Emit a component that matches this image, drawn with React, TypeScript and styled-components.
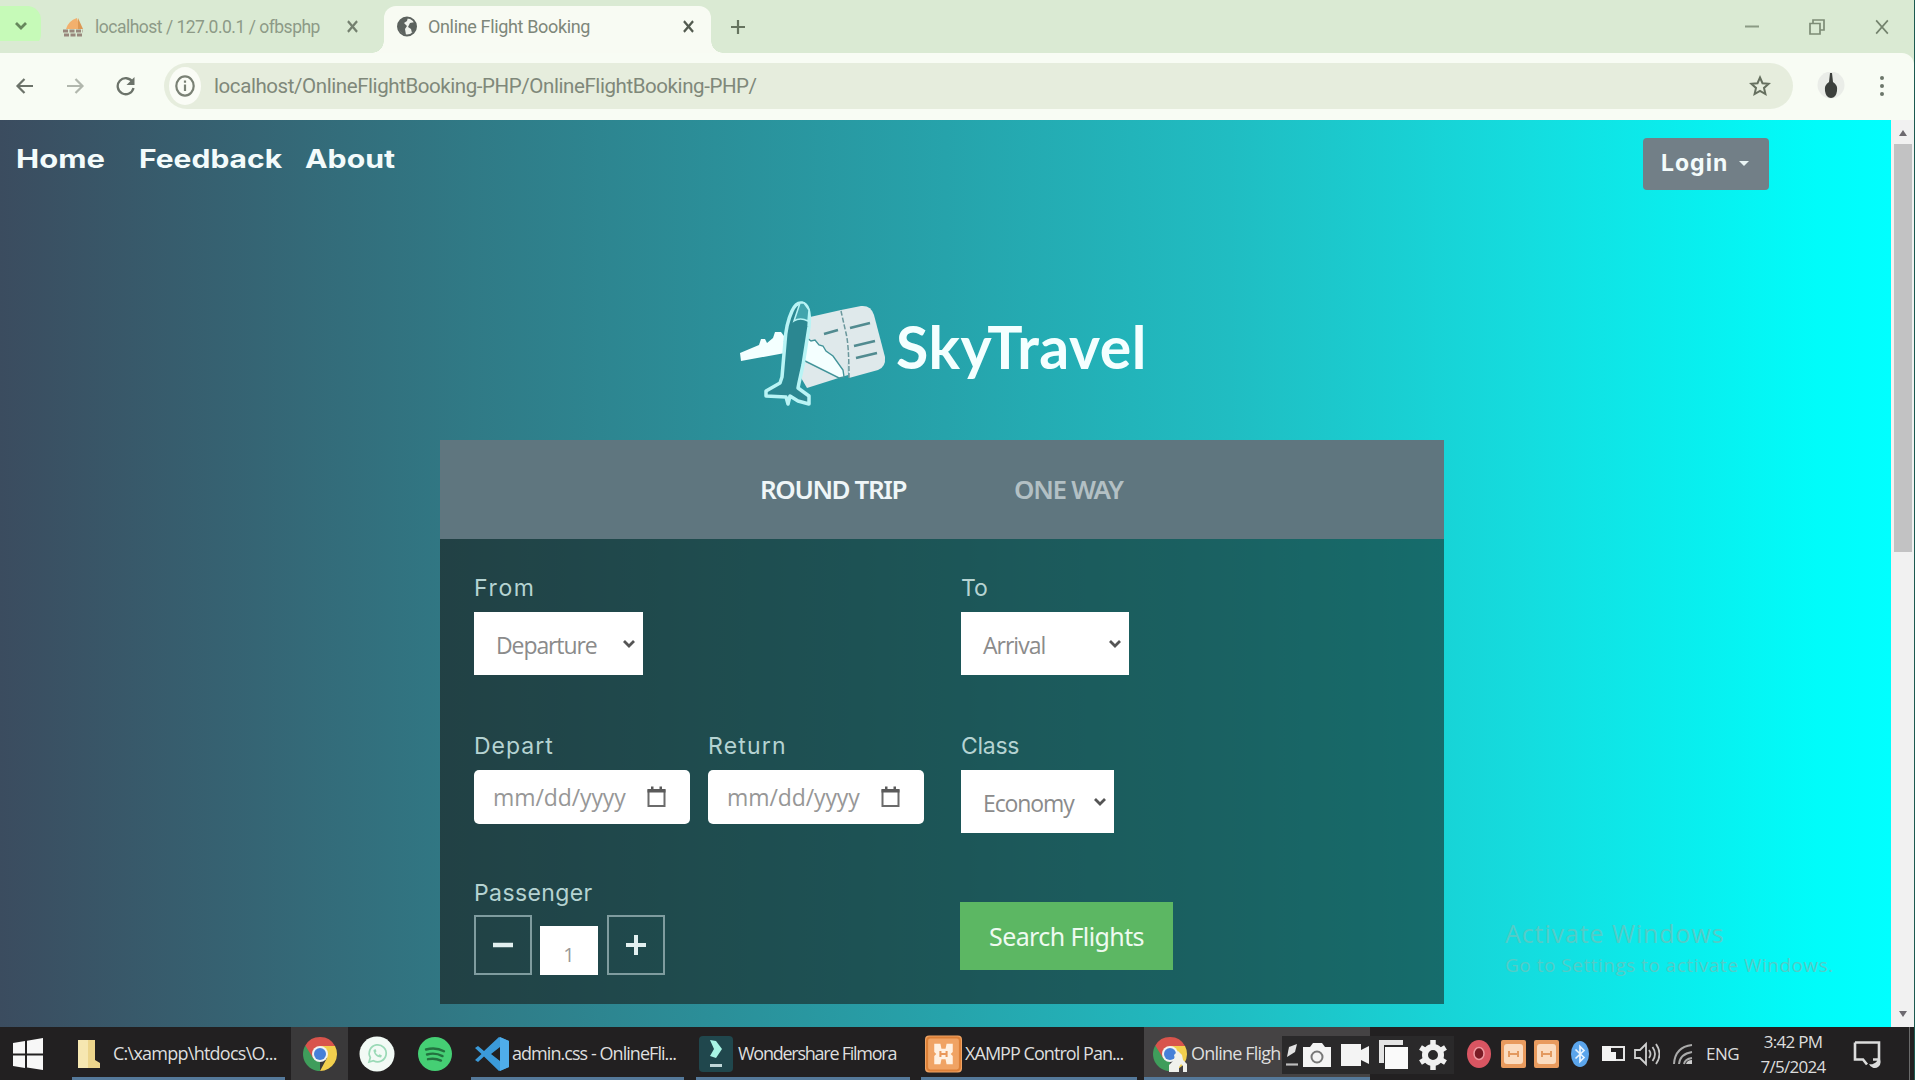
import React from "react";
import styled, { createGlobalStyle } from "styled-components";

const GlobalStyle = createGlobalStyle`
  *, *::before, *::after { box-sizing: border-box; }
  body { margin: 0; overflow: hidden; font-family: "Open Sans", "Noto Sans", sans-serif; }
  svg { display: block; flex: none; }
`;

/* ---------- shared ---------- */

const Screen = styled.div`
  display: flex;
  flex-direction: column;
  width: 1915px;
  height: 1080px;
  overflow: hidden;
  border-right: 1px solid #1c5a50;
  background: #222021;
`;

const Text = styled.span<{ $size: number; $ls?: number; $ml?: number; $width?: number }>`
  flex: none;
  font-size: ${(p) => p.$size}px;
  letter-spacing: ${(p) => p.$ls ?? 0}px;
  margin-left: ${(p) => p.$ml ?? 0}px;
  width: ${(p) => (p.$width ? `${p.$width}px` : "auto")};
  white-space: nowrap;
`;

const Slot = styled.div<{ $ml?: number; $push?: boolean }>`
  flex: none;
  margin-left: ${(p) => (p.$push ? "auto" : `${p.$ml ?? 0}px`)};
`;

/* ---------- browser chrome ---------- */

const TabStrip = styled.div`
  display: flex;
  align-items: center;
  flex: none;
  height: 53px;
  background: #daead3;
  color: #8d9a87;
  font-family: Roboto, "Noto Sans", sans-serif;
`;

const TabSearch = styled.div`
  display: flex;
  align-items: center;
  justify-content: center;
  width: 41px;
  height: 42px;
  border-radius: 0 14px 14px 0;
  background: #c6fab8;
`;

const Tab = styled.div<{ $active?: boolean }>`
  display: flex;
  align-items: center;
  position: relative;
  align-self: flex-end;
  width: ${(p) => (p.$active ? 327 : 343)}px;
  height: 47px;
  padding: 0 16px 6px ${(p) => (p.$active ? 13 : 21)}px;
  border-radius: 12px 12px 0 0;
  background: ${(p) => (p.$active ? "#f8fbf3" : "transparent")};
  color: ${(p) => (p.$active ? "#7e877a" : "#8d9a87")};

  &::before, &::after {
    content: "";
    display: ${(p) => (p.$active ? "block" : "none")};
    position: absolute;
    bottom: 0;
    width: 12px;
    height: 12px;
  }
  &::before { left: -12px; background: radial-gradient(circle at 0 0, transparent 11.5px, #f8fbf3 12px); }
  &::after { right: -12px; background: radial-gradient(circle at 100% 0, transparent 11.5px, #f8fbf3 12px); }
`;

const WindowControls = styled.div`
  display: flex;
  align-items: center;
  gap: 50px;
  margin-left: auto;
  padding-right: 25px;
`;

const Toolbar = styled.div`
  display: flex;
  align-items: center;
  flex: none;
  height: 67px;
  padding: 0 0 1px 15px;
  border-top-right-radius: 12px;
  background: #f8fcf4;
  box-shadow: 0 -12px 0 #daead3;
`;

const Omnibox = styled.div`
  display: flex;
  align-items: center;
  width: 1629px;
  height: 46px;
  margin-left: 28px;
  padding: 0 22px 0 5px;
  border-radius: 23px;
  background: #e6eddd;
  color: #7f887a;
  font-family: Roboto, "Noto Sans", sans-serif;
`;

const SiteInfo = styled.div`
  display: flex;
  align-items: center;
  justify-content: center;
  width: 32px;
  height: 38px;
  border-radius: 50%;
  background: #fafcf6;
`;

/* ---------- page ---------- */

const Viewport = styled.div`
  display: flex;
  flex: none;
  height: 907px;
`;

const Page = styled.main`
  display: flex;
  flex-direction: column;
  position: relative;
  width: 1891px;
  background: linear-gradient(to right, #3b4c5f 0, #307a86 25%, #26a3ab 50%, #20bdc2 65%, #14dddf 81%, #00fcfa 96%, #00ffff 100%);
`;

const Nav = styled.nav`
  display: flex;
  align-items: flex-start;
  height: 160px;
  flex: none;
  padding: 18px 122px 0 16px;
  color: #f3fbfb;
  font-family: Inter, "Open Sans", sans-serif;
`;

const NavLink = styled.a<{ $width: number; $stretch: number }>`
  display: block;
  width: ${(p) => p.$width}px;
  padding-top: 4px;
  font-size: 25px;
  line-height: 34px;
  font-weight: 700;
  white-space: nowrap;
  transform: scaleX(${(p) => p.$stretch});
  transform-origin: left;
`;

const LoginButton = styled.button`
  display: flex;
  align-items: center;
  width: 126px;
  height: 52px;
  margin-left: auto;
  padding: 0 0 2px 18px;
  border: 0;
  border-radius: 4px;
  background: #727f87;
  color: #f3fbfb;
  font: 700 23px/34px Inter, "Open Sans", sans-serif;
  letter-spacing: 1px;
`;

const Caret = styled.i`
  margin: 1px 0 0 11px;
  border: 5.5px solid transparent;
  border-top-color: #eaf5f5;
  border-bottom: 0;
`;

const Brand = styled.div`
  display: flex;
  height: 160px;
  flex: none;
  padding-left: 720px;
`;

const BrandName = styled.h1`
  margin: 32px 0 0 5px;
  color: #f4ffff;
  font: 700 59px/70px Lato, "Open Sans", sans-serif;
  letter-spacing: 0.5px;
  white-space: nowrap;
`;

const Card = styled.section`
  width: 1004px;
  height: 564px;
  flex: none;
  margin-left: 440px;
  background: rgba(20, 17, 14, 0.53);
`;

const TripTabs = styled.div`
  display: flex;
  align-items: center;
  height: 99px;
  padding: 0 0 2px 320px;
  background: #5f767f;
`;

const TripTab = styled.span<{ $active?: boolean }>`
  width: ${(p) => (p.$active ? 254 : 120)}px;
  font: 600 26px/40px "Noto Sans", "Open Sans", sans-serif;
  letter-spacing: ${(p) => (p.$active ? -1.4 : -1.3)}px;
  color: ${(p) => (p.$active ? "#eff6f8" : "#b3c0c4")};
  white-space: nowrap;
`;

const Form = styled.form`
  display: grid;
  grid-template-columns: 487px 1fr;
  grid-template-rows: 158px 147px auto;
  padding: 34px 0 0 34px;
`;

const Field = styled.div<{ $width?: number }>`
  width: ${(p) => (p.$width ? `${p.$width}px` : "auto")};
`;

const FieldPair = styled.div`
  display: flex;
`;

const Label = styled.label<{ $ls?: number }>`
  display: block;
  height: 30px;
  margin-bottom: 9px;
  color: #b5d3d2;
  font: 400 23px/31px Inter, "Open Sans", sans-serif;
  letter-spacing: ${(p) => p.$ls ?? 0}px;
  white-space: nowrap;
`;

const Select = styled.div<{ $width: number; $ls: number }>`
  display: flex;
  align-items: center;
  justify-content: space-between;
  width: ${(p) => p.$width}px;
  height: 63px;
  padding: 2px 7px 0 22px;
  background: #fff;
  color: #8b8b8b;
  font: 400 23px/30px "Open Sans", "Noto Sans", sans-serif;
  letter-spacing: ${(p) => p.$ls}px;
`;

const DateBox = styled.div`
  display: flex;
  align-items: center;
  justify-content: space-between;
  width: 216px;
  height: 54px;
  padding: 0 24px 1px 19px;
  border-radius: 5px;
  background: #fff;
  color: #979797;
  font: 400 23px/30px "Open Sans", "Noto Sans", sans-serif;
  letter-spacing: -0.1px;
`;

const Stepper = styled.div`
  display: flex;
  align-items: flex-end;
  margin-top: -2px;
`;

const StepButton = styled.button`
  display: flex;
  align-items: center;
  justify-content: center;
  width: 58px;
  height: 60px;
  padding: 0;
  border: 2px solid #7f9c9f;
  background: transparent;
`;

const Count = styled.div`
  width: 58px;
  height: 49px;
  margin: 0 9px 0 8px;
  padding-top: 14px;
  background: #fff;
  color: #999;
  text-align: center;
  font: 400 20px/30px "Open Sans", "Noto Sans", sans-serif;
`;

const SearchButton = styled.button`
  width: 213px;
  height: 68px;
  margin: 24px 0 0 -1px;
  padding: 0;
  border: 0;
  background: #5cb763;
  color: #eefaf0;
  font: 400 25px/34px "Noto Sans", "Open Sans", sans-serif;
  letter-spacing: -0.6px;
  white-space: nowrap;
`;

const Watermark = styled.div`
  position: absolute;
  left: 1505px;
  top: 795px;
  color: #55cbc6;
  font-family: "Open Sans", "Noto Sans", sans-serif;
  white-space: nowrap;
`;

const WatermarkTitle = styled.div`
  font-size: 25px;
  line-height: 36px;
  letter-spacing: 0.9px;
`;

const WatermarkNote = styled.div`
  font-size: 19px;
  line-height: 28px;
  letter-spacing: 0.5px;
`;

const Scrollbar = styled.div`
  display: flex;
  flex-direction: column;
  align-items: center;
  justify-content: space-between;
  width: 23px;
  padding: 10px 0 10px;
  background: #f1f1f1;
`;

const ScrollThumb = styled.div`
  width: 18px;
  height: 408px;
  margin: 8px 0 auto;
  background: #c2c2c3;
`;

const ScrollArrow = styled.i<{ $down?: boolean }>`
  border: 4.5px solid transparent;
  border-bottom: ${(p) => (p.$down ? "0" : "6px solid #6d6a70")};
  border-top: ${(p) => (p.$down ? "6px solid #6d6a70" : "0")};
`;

/* ---------- taskbar ---------- */

const Taskbar = styled.footer`
  display: flex;
  flex: none;
  height: 53px;
  background: #222021;
  color: #dcdcdc;
  font-family: "Open Sans", "Noto Sans", sans-serif;
`;

const Task = styled.div<{ $ml?: number; $width: number; $pad?: number; $bg?: string; $open?: boolean }>`
  display: flex;
  align-items: center;
  flex: none;
  width: ${(p) => p.$width}px;
  height: 53px;
  margin-left: ${(p) => p.$ml ?? 0}px;
  padding-left: ${(p) => p.$pad ?? 0}px;
  padding-top: 3px;
  background: ${(p) => p.$bg ?? "transparent"};
  border-bottom: 3px solid ${(p) => (p.$open ? "#55799a" : p.$bg ?? "transparent")};
  overflow: hidden;
`;

const TaskLabel = styled(Text)`
  padding-bottom: 1px;
  color: #dedede;
  font-weight: 500;
`;

const CaptureTools = styled.div`
  display: flex;
  align-items: center;
  flex: none;
  width: 172px;
  height: 38px;
  margin: 9px 0 0 -88px;
  padding-left: 3px;
  background: #2a292a;
`;

const Tray = styled.div`
  display: flex;
  align-items: center;
  flex: 1;
`;

const Clock = styled.div`
  display: flex;
  flex-direction: column;
  align-items: center;
  width: 70px;
  margin-left: 16px;
  font-size: 17px;
  font-weight: 500;
  line-height: 25px;
  letter-spacing: -0.7px;
  white-space: nowrap;
`;

const ShowDesktop = styled.div`
  width: 5px;
  height: 53px;
  margin-left: auto;
  border-left: 1px solid #6a6a6a;
`;

/* ---------- icons ---------- */

const Cross = ({ size = 11, color = "#5f6a5a", w = 2.4 }: { size?: number; color?: string; w?: number }) => (
  <svg width={size} height={size + 2} viewBox="0 0 12 12" preserveAspectRatio="none">
    <path d="M1 1l10 10M11 1L1 11" stroke={color} strokeWidth={w} fill="none" />
  </svg>
);

const ChevronDown = ({ color = "#555" }: { color?: string }) => (
  <svg width="14" height="14" viewBox="0 0 14 14">
    <path d="M2 3l5 5 5-5" stroke={color} strokeWidth="2.8" fill="none" />
  </svg>
);

const Arrow = ({ color, flip }: { color: string; flip?: boolean }) => (
  <svg width="19" height="18" viewBox="0 0 19 18">
    <path transform={flip ? "translate(19 0) scale(-1 1)" : undefined} d="M18 9H3M9.500 2L2.500 9l7 7" stroke={color} strokeWidth="2.200" fill="none" />
  </svg>
);

const Calendar = () => (
  <svg width="19" height="22" viewBox="0 0 19 22">
    <path d="M1.500 4.500h16v15.500h-16z" fill="none" stroke="#6b6b6b" strokeWidth="2" />
    <path d="M0.500 3h18v3.500h-18zM4 0.500h2.500v3H4zM12.500 0.500H15v3h-2.500z" fill="#5a5a5a" />
  </svg>
);

const Chrome = ({ person }: { person?: boolean }) => (
  <svg width="36" height="38" viewBox="0 0 36 38">
    <g transform="translate(0 1)">
      <path d="M18 18V35A17 17 0 0 1 3.300 9.500z" fill="#3f9d5b" />
      <path d="M18 10h15a17 17 0 0 1-15 25l7-13z" fill="#f2cf4d" />
      <path d="M3.300 9.500A17 17 0 0 1 33 10H18l-7 12z" fill="#d8544c" />
      <circle cx="18" cy="18" r="8" fill="#f1f3f0" />
      <circle cx="18" cy="18" r="6" fill="#4680d8" />
    </g>
    {person && <path d="M17 37v-7l6-6-1-4 4-4 4 4 1 5 4 4v8h-4v-6l-2-2-2 3v5z" fill="#f0f1ec" />}
  </svg>
);

const WindowsMark = () => (
  <svg width="32" height="32" viewBox="0 0 32 32">
    <path d="M1 5l12-2v12.500H1zM15 2.700L31 0v15.500H15zM1 17.500h12V30L1 28zM15 17.500h16V32l-16-2.500z" fill="#f7f7f7" />
  </svg>
);

const Folder = () => (
  <svg width="24" height="30" viewBox="0 0 24 30">
    <path d="M1 1h17v20l5 3v5H1z" fill="#ecd58c" />
    <path d="M1 1h10v28H1z" fill="#f6e7b1" />
  </svg>
);

const WhatsApp = () => (
  <svg width="36" height="36" viewBox="0 0 36 36">
    <circle cx="18" cy="18" r="17.500" fill="#f2faf5" />
    <path d="M10 26l1.300-4.500a8.500 8.500 0 1 1 3.200 3.200z" fill="none" stroke="#9bdab7" strokeWidth="1.700" />
    <path d="M14.500 14c0 4 3.500 7.500 7.500 7.500l1-2-2.500-1.300-1.200 1a7 7 0 0 1-2.800-2.800l1-1.200-1-2.200z" fill="#9bdab7" />
  </svg>
);

const Spotify = () => (
  <svg width="36" height="36" viewBox="0 0 36 36">
    <circle cx="18" cy="18" r="17" fill="#45cf74" />
    <path d="M9 13.500c6-1.700 13-1 18 1.700M10 18.500c5-1.400 11-.8 15.500 1.600M11 23.200c4.500-1 9-.5 13 1.400" fill="none" stroke="#23713f" strokeWidth="2.400" strokeLinecap="round" />
  </svg>
);

const VSCode = () => (
  <svg width="36" height="36" viewBox="0 0 36 36">
    <path d="M25 1l10 4v26l-10 4L10 20.500 4 26l-3-2 6.500-6L1 12l3-2 6 5zM26 11l-9 7 9 7z" fill="#3b9ad9" fillRule="evenodd" />
    <path d="M26 1l9 4v26l-9 4z" fill="#4fadea" />
  </svg>
);

const Filmora = () => (
  <svg width="34" height="36" viewBox="0 0 34 36">
    <rect width="34" height="36" rx="4" fill="#20474d" />
    <path d="M11 4l6 1 6 8-6 9-6-2 4-7z" fill="#a8f4e4" />
    <path d="M11 29.500h12" stroke="#bfd6d8" strokeWidth="3" />
  </svg>
);

const XamppMark = () => (
  <svg width="37" height="38" viewBox="0 0 36 36">
    <rect width="36" height="36" rx="4" fill="#f0a364" />
    <rect x="2" y="2" width="32" height="32" rx="3" fill="none" stroke="#dc8038" strokeWidth="2" />
    <path d="M9 8h6l1 5h4l1-5h6v8l-2 2 2 2v8h-6l-1-5h-4l-1 5H9v-8l2-2-2-2z" fill="#fff1e2" />
    <path d="M15 15v6M21 15v6M15 18h6" stroke="#e9985a" strokeWidth="2" />
  </svg>
);

const XamppTray = () => (
  <svg width="25" height="28" viewBox="0 0 25 28">
    <rect width="25" height="28" rx="2" fill="#e99b5e" />
    <rect x="3" y="4" width="19" height="20" rx="3" fill="#fbdcc0" />
    <path d="M8 11v6M17 11v6M8 14h9" stroke="#e39a60" strokeWidth="2" />
  </svg>
);

const BrandMark = () => (
  <svg width="171" height="150" viewBox="0 0 171 150">
    <g fill="#dfe9eb">
      <path d="M90 37l31-7 6 23 1 42-41 13-7-12z" />
      <path d="M121 30l20-4q10-1 13 9l11 42q1 10-7 13l-29 8z" />
    </g>
    <path d="M121 31q2 9 5 22 3 12 3 45" fill="none" stroke="#6a979c" strokeWidth="1.500" strokeDasharray="5 2" />
    <path d="M130 48l20-5M134 66l21-5M136 78l21-5M104 54l14-4" stroke="#518b90" strokeWidth="2.600" />
    <path d="M68 54l-3 19-44 8-1-8 19-8 2-6h4l2 4 6-5 2-6h6l3 4z" fill="#f4ffff" />
    <path d="M86 57l5 4 4-1 4 5 4 1 3 5 7 5 10 14 1 7-5 1-36-18z" fill="#f4ffff" stroke="#43949a" strokeWidth="1.400" />
    <path d="M82 23q9 2 7 24l-6 38-4 18-1 5 11 8v8l-11-3-8-5-2 8-2-7-20-1 0-5 14-8 2-6 3-35q1-18 7-31 4-9 10-8z" fill="#2b8791" stroke="#b9f4f5" strokeWidth="3.500" strokeLinejoin="round" />
    <path d="M74 41q6-4 14 0l1-11-5-7h-4z" fill="#42a5ad" stroke="#b9f4f5" strokeWidth="1.500" />
  </svg>
);

/* ---------- sections ---------- */

const BrowserTabs = () => (
  <TabStrip>
    <TabSearch><ChevronDown color="#66875c" /></TabSearch>
    <Tab>
      <svg width="23" height="20" viewBox="0 0 23 20">
        <path d="M4 12Q6 4 15 1l3 11z" fill="#f2b06d" />
        <path d="M16 1l5 11h-5z" fill="#dc9853" />
        <path d="M1 14h20M2 18h19" stroke="#98877c" strokeWidth="3" strokeDasharray="5 1.500" />
      </svg>
      <Text $size={17.5} $ml={10} $width={252} $ls={-0.5}>localhost / 127.0.0.1 / ofbsphp</Text>
      <Cross color="#74806f" />
    </Tab>
    <Tab $active>
      <svg width="20" height="21" viewBox="0 0 20 21">
        <circle cx="10" cy="10.500" r="9" fill="#f0f3ed" stroke="#5c625e" strokeWidth="2" />
        <path d="M2 6q4-5 9-5l-1 4-3 2 3 3-2 3 1 6Q2 17 1 10zM13 7l5-1q3 7-3 11l-1-4-3-2z" fill="#5c625e" />
      </svg>
      <Text $size={18} $ml={11} $width={255} $ls={-0.35}>Online Flight Booking</Text>
      <Cross color="#535b50" />
    </Tab>
    <Slot $ml={20}>
      <svg width="14" height="14" viewBox="0 0 14 14"><path d="M7 0v14M0 7h14" stroke="#66745f" strokeWidth="2.200" /></svg>
    </Slot>
    <WindowControls>
      <svg width="14" height="3" viewBox="0 0 14 3"><path d="M0 1.500h14" stroke="#8b9b84" strokeWidth="2" /></svg>
      <svg width="16" height="16" viewBox="0 0 16 16">
        <path d="M1 4.500h10V15H1zM4 4V1h11v10h-3.500" fill="none" stroke="#7d8c76" strokeWidth="1.700" />
      </svg>
      <Cross size={14} color="#74836e" w={1.5} />
    </WindowControls>
  </TabStrip>
);

const AddressBar = () => (
  <Toolbar>
    <Arrow color="#6c736a" />
    <Slot $ml={32}><Arrow color="#b1b7ad" flip /></Slot>
    <Slot $ml={31}>
      <svg width="20" height="20" viewBox="0 0 20 20">
        <path d="M16.500 6A8 8 0 1 0 17.500 12" fill="none" stroke="#6c736a" strokeWidth="2.300" />
        <path d="M18.500 1v8h-8z" fill="#6c736a" />
      </svg>
    </Slot>
    <Omnibox>
      <SiteInfo>
        <svg width="20" height="22" viewBox="0 0 20 22">
          <ellipse cx="10" cy="11" rx="8.700" ry="9.700" fill="none" stroke="#7a8175" strokeWidth="2.200" />
          <path d="M10 9.500V16M10 5.500v2.200" stroke="#7a8175" strokeWidth="2.200" />
        </svg>
      </SiteInfo>
      <Text $size={20.5} $ml={13} $ls={-0.42}>localhost/OnlineFlightBooking-PHP/OnlineFlightBooking-PHP/</Text>
      <Slot $push>
        <svg width="22" height="22" viewBox="0 0 22 22">
          <path d="M11 2.500l2.500 5.700 6.200.6-4.700 4.100 1.400 6.100L11 15.800 5.600 19 7 12.900 2.300 8.800l6.200-.6z" fill="none" stroke="#66705f" strokeWidth="2" />
        </svg>
      </Slot>
    </Omnibox>
    <Slot $ml={24}>
      <svg width="28" height="28" viewBox="0 0 28 28">
        <circle cx="14" cy="13" r="13.500" fill="#eaede8" />
        <path d="M13 1h2l1 9q5 3 4 9-1 7-6 7t-6-7q-1-6 4-9z" fill="#3c403c" />
      </svg>
    </Slot>
    <Slot $ml={34}>
      <svg width="6" height="22" viewBox="0 0 6 22">
        <g fill="#6c766a"><circle cx="3" cy="3" r="2" /><circle cx="3" cy="11" r="2" /><circle cx="3" cy="19" r="2" /></g>
      </svg>
    </Slot>
  </Toolbar>
);

const BookingForm = () => (
  <Card>
    <TripTabs>
      <TripTab $active>ROUND TRIP</TripTab>
      <TripTab>ONE WAY</TripTab>
    </TripTabs>
    <Form>
      <Field>
        <Label $ls={1.6}>From</Label>
        <Select $width={169} $ls={-1.1}>Departure<ChevronDown /></Select>
      </Field>
      <Field>
        <Label>To</Label>
        <Select $width={168} $ls={-1}>Arrival<ChevronDown /></Select>
      </Field>
      <FieldPair>
        <Field $width={234}>
          <Label $ls={1}>Depart</Label>
          <DateBox>mm/dd/yyyy<Calendar /></DateBox>
        </Field>
        <Field>
          <Label $ls={1.2}>Return</Label>
          <DateBox>mm/dd/yyyy<Calendar /></DateBox>
        </Field>
      </FieldPair>
      <Field>
        <Label $ls={-0.3}>Class</Label>
        <Select $width={153} $ls={-1.1}>Economy<ChevronDown /></Select>
      </Field>
      <Field>
        <Label $ls={0.4}>Passenger</Label>
        <Stepper>
          <StepButton type="button">
            <svg width="20" height="20" viewBox="0 0 20 20"><path d="M0 10h20" stroke="#e2efef" strokeWidth="4.500" /></svg>
          </StepButton>
          <Count>1</Count>
          <StepButton type="button">
            <svg width="20" height="20" viewBox="0 0 20 20"><path d="M0 10h20M10 0v20" stroke="#e2efef" strokeWidth="4" /></svg>
          </StepButton>
        </Stepper>
      </Field>
      <SearchButton type="button">Search Flights</SearchButton>
    </Form>
  </Card>
);

const SystemTaskbar = () => (
  <Taskbar>
    <Task $width={60} $pad={12}><WindowsMark /></Task>
    <Task $ml={12} $width={213} $pad={5} $open>
      <Folder />
      <TaskLabel $size={18} $ml={12} $ls={-0.75}>C:\xampp\htdocs\O...</TaskLabel>
    </Task>
    <Task $ml={6} $width={57} $pad={11} $bg="#3a393a"><Chrome /></Task>
    <Task $width={58} $pad={11}><WhatsApp /></Task>
    <Task $width={59} $pad={11}><Spotify /></Task>
    <Task $ml={6} $width={213} $pad={3} $open>
      <VSCode />
      <TaskLabel $size={18} $ml={2} $ls={-0.95}>admin.css - OnlineFli...</TaskLabel>
    </Task>
    <Task $ml={12} $width={214} $pad={3} $open>
      <Filmora />
      <TaskLabel $size={18} $ml={5} $ls={-1.25}>Wondershare Filmora</TaskLabel>
    </Task>
    <Task $ml={11} $width={216} $pad={4} $open>
      <XamppMark />
      <TaskLabel $size={18} $ml={3} $ls={-0.95}>XAMPP Control Pan...</TaskLabel>
    </Task>
    <Task $ml={7} $width={226} $pad={8} $bg="#454344" $open>
      <Chrome person />
      <TaskLabel $size={18} $ml={3} $ls={-0.8}>Online Fligh</TaskLabel>
    </Task>
    <CaptureTools>
      <svg width="14" height="24" viewBox="0 0 14 24">
        <path d="M2 14L4 4l8-3-2 8z" fill="#e3e3e3" /><path d="M1 21.500h12" stroke="#bdbdbd" strokeWidth="2.200" />
      </svg>
      <Slot $ml={3}>
        <svg width="30" height="26" viewBox="0 0 30 26">
          <path d="M1 5h7l3-4h9l3 4h6v20H1z" fill="#f4f4f4" />
          <circle cx="15" cy="15" r="5.500" fill="none" stroke="#777" strokeWidth="2" />
        </svg>
      </Slot>
      <Slot $ml={9}>
        <svg width="29" height="24" viewBox="0 0 29 24"><path d="M0 1h20v6l8-4v18l-8-4v6H0z" fill="#f4f4f4" /></svg>
      </Slot>
      <Slot $ml={9}>
        <svg width="30" height="32" viewBox="0 0 30 32">
          <path d="M0 1h24v5H5v18H0z" fill="#e4e4e4" /><path d="M6 8h23v22H6z" fill="#fafafa" />
        </svg>
      </Slot>
      <Slot $ml={10}>
        <svg width="28" height="32" viewBox="0 0 28 32">
          <circle cx="14" cy="16" r="8" fill="none" stroke="#f0f0f0" strokeWidth="6" />
          <path d="M14 1v6M14 25v6M1.500 8.500l5 3M21.500 20.500l5 3M1.500 23.500l5-3M21.500 11.500l5-3" stroke="#f0f0f0" strokeWidth="5.500" />
        </svg>
      </Slot>
    </CaptureTools>
    <Tray>
      <Slot $ml={12}>
        <svg width="26" height="30" viewBox="0 0 26 30">
          <ellipse cx="13" cy="15" rx="12" ry="14" fill="#d95562" /><ellipse cx="13" cy="14.500" rx="5" ry="6" fill="#7a1b25" stroke="#f09aa2" strokeWidth="1.500" />
        </svg>
      </Slot>
      <Slot $ml={9}><XamppTray /></Slot>
      <Slot $ml={8}><XamppTray /></Slot>
      <Slot $ml={11}>
        <svg width="20" height="28" viewBox="0 0 20 28">
          <ellipse cx="10" cy="14" rx="9" ry="13" fill="#5ba5ec" />
          <path d="M5.500 9.500l8.500 8-4 4v-15l4 4-8.500 8" fill="none" stroke="#eaf5ff" strokeWidth="1.700" />
        </svg>
      </Slot>
      <Slot $ml={12}>
        <svg width="24" height="17" viewBox="0 0 24 17">
          <path d="M3 2h19v13H3z" fill="none" stroke="#e5e5e5" strokeWidth="2" /><path d="M0 1h9v6h5v9H0z" fill="#f3f3f3" />
        </svg>
      </Slot>
      <Slot $ml={8}>
        <svg width="26" height="26" viewBox="0 0 26 26">
          <path d="M1 9h5l6-6v20l-6-6H1z" fill="none" stroke="#d0d0d0" strokeWidth="1.800" />
          <path d="M15 9q3 4 0 8M18.500 6q5 7 0 14M22 3q7 10 0 20" fill="none" stroke="#c5c5c5" strokeWidth="1.800" />
        </svg>
      </Slot>
      <Slot $ml={12}>
        <svg width="21" height="22" viewBox="0 0 21 22">
          <path d="M2 21Q3 4 20 2M7 21q1-10 13-12M12 21q1-5 8-6" fill="none" stroke="#aaa" strokeWidth="2" />
          <path d="M14 21q1-4 6-4v4z" fill="#ccc" />
        </svg>
      </Slot>
      <Text $size={17} $ml={13} $ls={-0.5} $width={36}>ENG</Text>
      <Clock><span>3:42 PM</span><span>7/5/2024</span></Clock>
      <Slot $ml={25}>
        <svg width="30" height="28" viewBox="0 0 30 28">
          <path d="M2 2.500h24v17h-6M2 2.500v17h8l4 5" fill="none" stroke="#dcdcdc" strokeWidth="2.600" />
          <path d="M25 17a6 6 0 1 1-9 7 7 7 0 0 0 9-7z" fill="#dcdcdc" />
        </svg>
      </Slot>
      <ShowDesktop />
    </Tray>
  </Taskbar>
);

export default function App() {
  return (
    <>
      <GlobalStyle />
      <Screen>
        <BrowserTabs />
        <AddressBar />
        <Viewport>
          <Page>
            <Nav>
              <NavLink $width={123} $stretch={1.24}>Home</NavLink>
              <NavLink $width={166} $stretch={1.2}>Feedback</NavLink>
              <NavLink $width={110} $stretch={1.21}>About</NavLink>
              <LoginButton>Login<Caret /></LoginButton>
            </Nav>
            <Brand>
              <BrandMark />
              <BrandName>SkyTravel</BrandName>
            </Brand>
            <BookingForm />
            <Watermark>
              <WatermarkTitle>Activate Windows</WatermarkTitle>
              <WatermarkNote>Go to Settings to activate Windows.</WatermarkNote>
            </Watermark>
          </Page>
          <Scrollbar>
            <ScrollArrow />
            <ScrollThumb />
            <ScrollArrow $down />
          </Scrollbar>
        </Viewport>
        <SystemTaskbar />
      </Screen>
    </>
  );
}
